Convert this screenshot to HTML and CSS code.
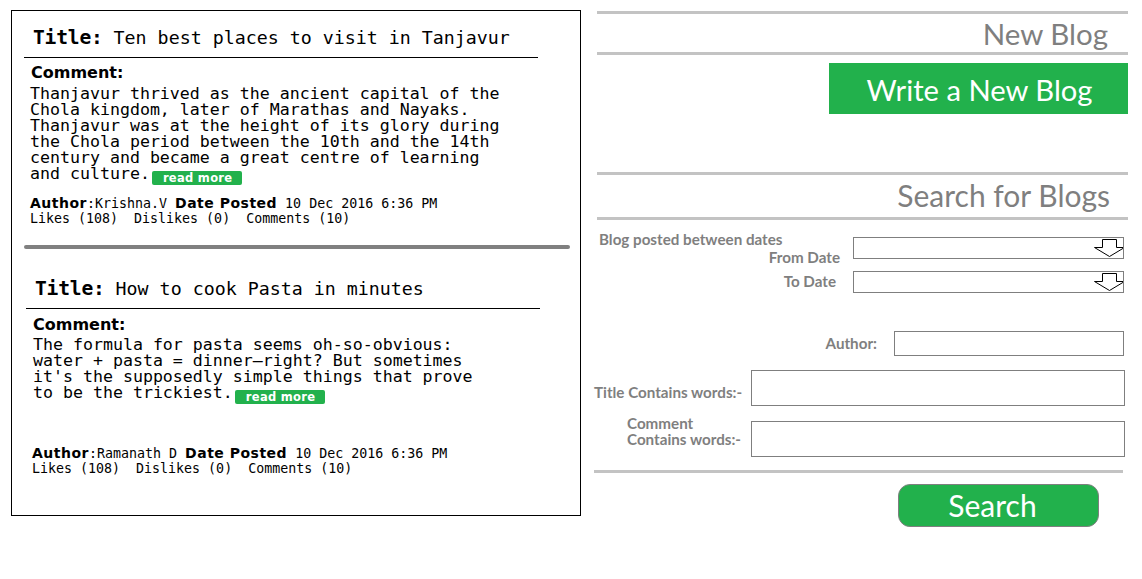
FILE: index.html
```html
<!DOCTYPE html>
<html lang="en">
<head>
<meta charset="utf-8">
<title>Blogs</title>
<link rel="stylesheet" href="styles.css">
</head>
<body>
<div class="page">
  <section class="posts">
    <article class="post">
      <h2 class="post-title"><span class="post-title-label">Title:</span> Ten best places to visit in Tanjavur</h2>
      <h3 class="post-comment-label">Comment:</h3>
      <p class="post-body">Thanjavur thrived as the ancient capital of the<br>Chola kingdom, later of Marathas and Nayaks.<br>Thanjavur was at the height of its glory during<br>the Chola period between the 10th and the 14th<br>century and became a great centre of learning<br>and culture.<a class="read-more" href="#">read more</a></p>
      <div class="post-meta">
        <div class="meta-line"><b class="meta-label">Author</b>:Krishna.V <b class="meta-label">Date Posted</b> 10 Dec 2016 6:36 PM</div>
        <div class="meta-line">Likes (108)&nbsp; Dislikes (0)&nbsp; Comments (10)</div>
      </div>
    </article>
    <hr class="post-separator">
    <article class="post post-second">
      <h2 class="post-title"><span class="post-title-label">Title:</span> How to cook Pasta in minutes</h2>
      <h3 class="post-comment-label">Comment:</h3>
      <p class="post-body">The formula for pasta seems oh-so-obvious:<br>water + pasta = dinner–right? But sometimes<br>it's the supposedly simple things that prove<br>to be the trickiest.<a class="read-more" href="#">read more</a></p>
      <div class="post-meta post-meta-far">
        <div class="meta-line"><b class="meta-label">Author</b>:Ramanath D <b class="meta-label">Date Posted</b> 10 Dec 2016 6:36 PM</div>
        <div class="meta-line">Likes (108)&nbsp; Dislikes (0)&nbsp; Comments (10)</div>
      </div>
    </article>
  </section>

  <aside class="sidebar">
    <hr class="rule rule-top">
    <h2 class="side-heading">New Blog</h2>
    <hr class="rule">
    <div class="write-row"><a class="write-btn" href="#">Write a New Blog</a></div>
    <hr class="rule rule-search">
    <h2 class="side-heading side-heading-search">Search for Blogs</h2>
    <hr class="rule">

    <form class="search-form">
      <div class="form-row date-row">
        <div class="date-labels">
          <div class="label label-intro">Blog posted between dates</div>
          <div class="label label-from">From Date</div>
        </div>
        <div class="date-input date-input-from">
          <svg class="date-arrow" width="32" height="20" viewBox="0 0 32 20"><polygon points="8.5,1.5 22.5,1.5 22.5,9.5 30.5,9.5 15.5,18.5 0.5,9.5 8.5,9.5" fill="#fff" stroke="#000" stroke-width="1"/></svg>
        </div>
      </div>
      <div class="form-row to-row">
        <div class="label label-to">To Date</div>
        <div class="date-input">
          <svg class="date-arrow" width="32" height="20" viewBox="0 0 32 20"><polygon points="8.5,1.5 22.5,1.5 22.5,9.5 30.5,9.5 15.5,18.5 0.5,9.5 8.5,9.5" fill="#fff" stroke="#000" stroke-width="1"/></svg>
        </div>
      </div>
      <div class="form-row author-row">
        <div class="label label-author">Author:</div>
        <div class="text-input author-input"></div>
      </div>
      <div class="form-row title-row">
        <div class="label label-title">Title Contains words:-</div>
        <div class="text-input big-input"></div>
      </div>
      <div class="form-row comment-row">
        <div class="label label-comment">Comment<br>Contains words:-</div>
        <div class="text-input big-input"></div>
      </div>
      <hr class="rule rule-bottom">
      <div class="search-row"><button class="search-btn" type="button">Search</button></div>
    </form>
  </aside>
</div>
</body>
</html>
```

FILE: styles.css
```css
* { box-sizing: border-box; }
html, body { margin: 0; padding: 0; background: #fff; }
body { width: 1142px; height: 579px; overflow: hidden; }

.page {
  display: flex;
  align-items: flex-start;
  padding-left: 11px;
}

/* ---------- left: posts ---------- */
.posts {
  margin-top: 10px;
  width: 570px;
  height: 506px;
  border: 1px solid #000;
  font-family: "DejaVu Sans Mono", "Liberation Mono", monospace;
  color: #000;
}

.post-title {
  margin: 15px 0 0 12px;
  width: 514px;
  height: 32px;
  padding: 0 0 7px 9px;
  border-bottom: 1px solid #000;
  font-size: 18.3px;
  line-height: 24px;
  font-weight: normal;
  white-space: nowrap;
}
.post-title-label {
  font-weight: bold;
  font-size: 19.6px;
  letter-spacing: -0.2px;
}

.post-comment-label {
  margin: 5px 0 0 19px;
  height: 20px;
  font-family: "DejaVu Sans", "Liberation Sans", sans-serif;
  font-weight: bold;
  font-size: 16px;
  line-height: 20px;
}

.post-body {
  margin: 3px 0 0 18px;
  font-size: 16.6px;
  line-height: 16px;
}

.read-more {
  display: inline-block;
  margin-left: 2px;
  height: 14px;
  padding: 0 10px 0 11px;
  background: #22b14c;
  border-radius: 2px;
  color: #fff;
  font-family: "DejaVu Sans", "Liberation Sans", sans-serif;
  font-weight: bold;
  font-size: 11.5px;
  line-height: 14px;
  letter-spacing: 0.3px;
  text-decoration: none;
  vertical-align: -3px;
}

.post-meta {
  margin: 10px 0 0 18px;
  font-size: 13.3px;
}
.meta-line {
  height: 16px;
  line-height: 16px;
  white-space: nowrap;
}
.meta-label {
  font-family: "DejaVu Sans", "Liberation Sans", sans-serif;
  font-weight: bold;
  font-size: 14px;
  line-height: 16px;
  letter-spacing: 0.5px;
}

.post-separator {
  margin: 18px 0 0 12px;
  width: 546px;
  height: 4px;
  border: 0;
  border-radius: 2px;
  background: #808080;
}

.post-second { padding-left: 2px; }
.post-second .post-title { margin-top: 28px; }
.post-second .post-comment-label { margin-top: 6px; }
.post-second .post-body { margin-top: 2px; margin-left: 19px; }
.post-meta-far { margin-top: 41px; }

/* ---------- right: sidebar ---------- */
.sidebar {
  margin-left: 13px;
  width: 534px;
  font-family: Lato, "Open Sans", sans-serif;
  color: #7f7f7f;
}

.rule {
  margin: 0 0 0 3px;
  height: 3px;
  border: 0;
  background: #c3c3c3;
}
.rule-top { margin-top: 11px; }
.rule-search { margin-top: 58px; }
.rule-bottom { margin: 13px 5px 0 0; }

.side-heading {
  margin: 0;
  height: 38px;
  padding-right: 20px;
  text-align: right;
  font-weight: normal;
  font-size: 29.5px;
  line-height: 40px;
}
.side-heading-search {
  height: 42px;
  line-height: 40px;
  padding-right: 18px;
  font-size: 30px;
}

.write-row {
  display: flex;
  justify-content: flex-end;
  margin-top: 8px;
}
.write-btn {
  display: flex;
  align-items: center;
  justify-content: center;
  width: 299px;
  height: 51px;
  background: #22b14c;
  color: #fff;
  font-size: 29.2px;
  text-decoration: none;
  padding: 1px 0 0 2px;
}

.search-form { margin: 0; }
.form-row { display: flex; }

.label {
  font-weight: bold;
  font-size: 15.2px;
  color: #7f7f7f;
}

.date-row { margin-top: 10px; }
.date-labels { width: 246px; line-height: 18px; }
.label-intro { padding-left: 5px; }
.label-from { text-align: right; }

.date-input {
  margin-left: 13px;
  width: 271px;
  height: 22px;
  border: 1px solid #7f7f7f;
  overflow: hidden;
  display: flex;
  justify-content: flex-end;
  align-items: center;
}
.date-input-from { margin-top: 7px; }
.date-arrow { flex: none; margin-right: -3px; }

.to-row { margin-top: 5px; }
.label-to { width: 242px; text-align: right; line-height: 20px; }
.to-row .date-input { margin-left: 17px; }

.text-input {
  border: 1px solid #7f7f7f;
  background: #fff;
}

.author-row { margin-top: 38px; }
.label-author { width: 283px; text-align: right; line-height: 25px; }
.author-input { margin-left: 17px; width: 230px; height: 25px; }

.title-row { margin-top: 14px; align-items: center; }
.label-title { width: 157px; padding-top: 7px; white-space: nowrap; }
.big-input { width: 374px; height: 36px; }

.comment-row { margin-top: 15px; align-items: flex-start; }
.label-comment { width: 157px; padding-left: 33px; margin-top: -6px; line-height: 16px; }

.search-row {
  margin-top: 11px;
  padding-left: 304px;
}
.search-btn {
  width: 201px;
  height: 43px;
  border: 1px solid #7f7f7f;
  border-radius: 12px;
  background: #22b14c;
  color: #fff;
  font-family: Lato, "Open Sans", sans-serif;
  font-size: 30px;
  line-height: 41px;
  padding: 0 12px 0 0;
}
```
